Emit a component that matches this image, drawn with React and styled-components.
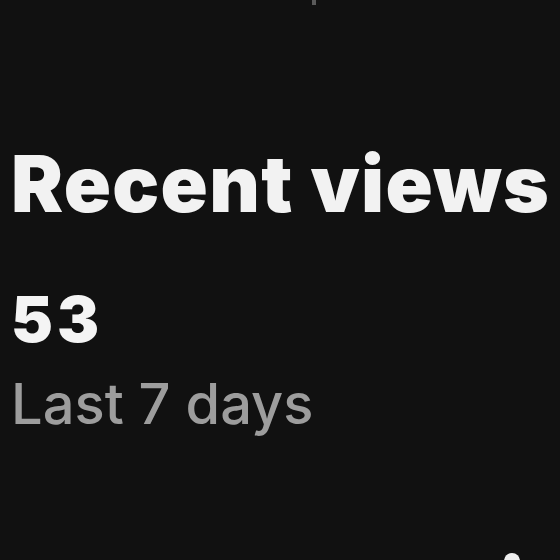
import React from "react";
import styled, { createGlobalStyle } from "styled-components";

const Global = createGlobalStyle`
  html, body { margin: 0; padding: 0; background: #111111; }
  body { font-family: Inter, "Noto Sans", sans-serif; }
`;

const Screen = styled.div`
  position: relative;
  width: 560px;
  height: 560px;
  overflow: hidden;
  background: #111111;
  box-sizing: border-box;
  padding: 140px 0 0 11px;
  display: flex;
  flex-direction: column;
`;

const Title = styled.h1`
  margin: 0;
  font-size: 78px;
  font-weight: 900;
  letter-spacing: 1.3px;
  line-height: 88px;
  color: #f2f2f2;
  white-space: nowrap;
`;

const Count = styled.div`
  margin-top: 59px;
  font-size: 63px;
  font-weight: 900;
  letter-spacing: 4px;
  line-height: 64px;
  color: #f4f4f4;
`;

const Caption = styled.div`
  margin-top: 21px;
  font-size: 56px;
  font-weight: 500;
  line-height: 64px;
  color: #9d9d9d;
`;

const TopMark = styled.div`
  position: absolute;
  top: 0;
  left: 312px;
  width: 4px;
  height: 5px;
  background: #5a5a5a;
`;

const Dot = styled.div`
  position: absolute;
  left: 504px;
  top: 553px;
  width: 16px;
  height: 16px;
  border-radius: 50%;
  background: #eeeeee;
`;

export default function App() {
  return (
    <>
      <Global />
      <Screen>
        <TopMark />
        <Title>Recent views</Title>
        <Count>53</Count>
        <Caption>Last 7 days</Caption>
        <Dot />
      </Screen>
    </>
  );
}
